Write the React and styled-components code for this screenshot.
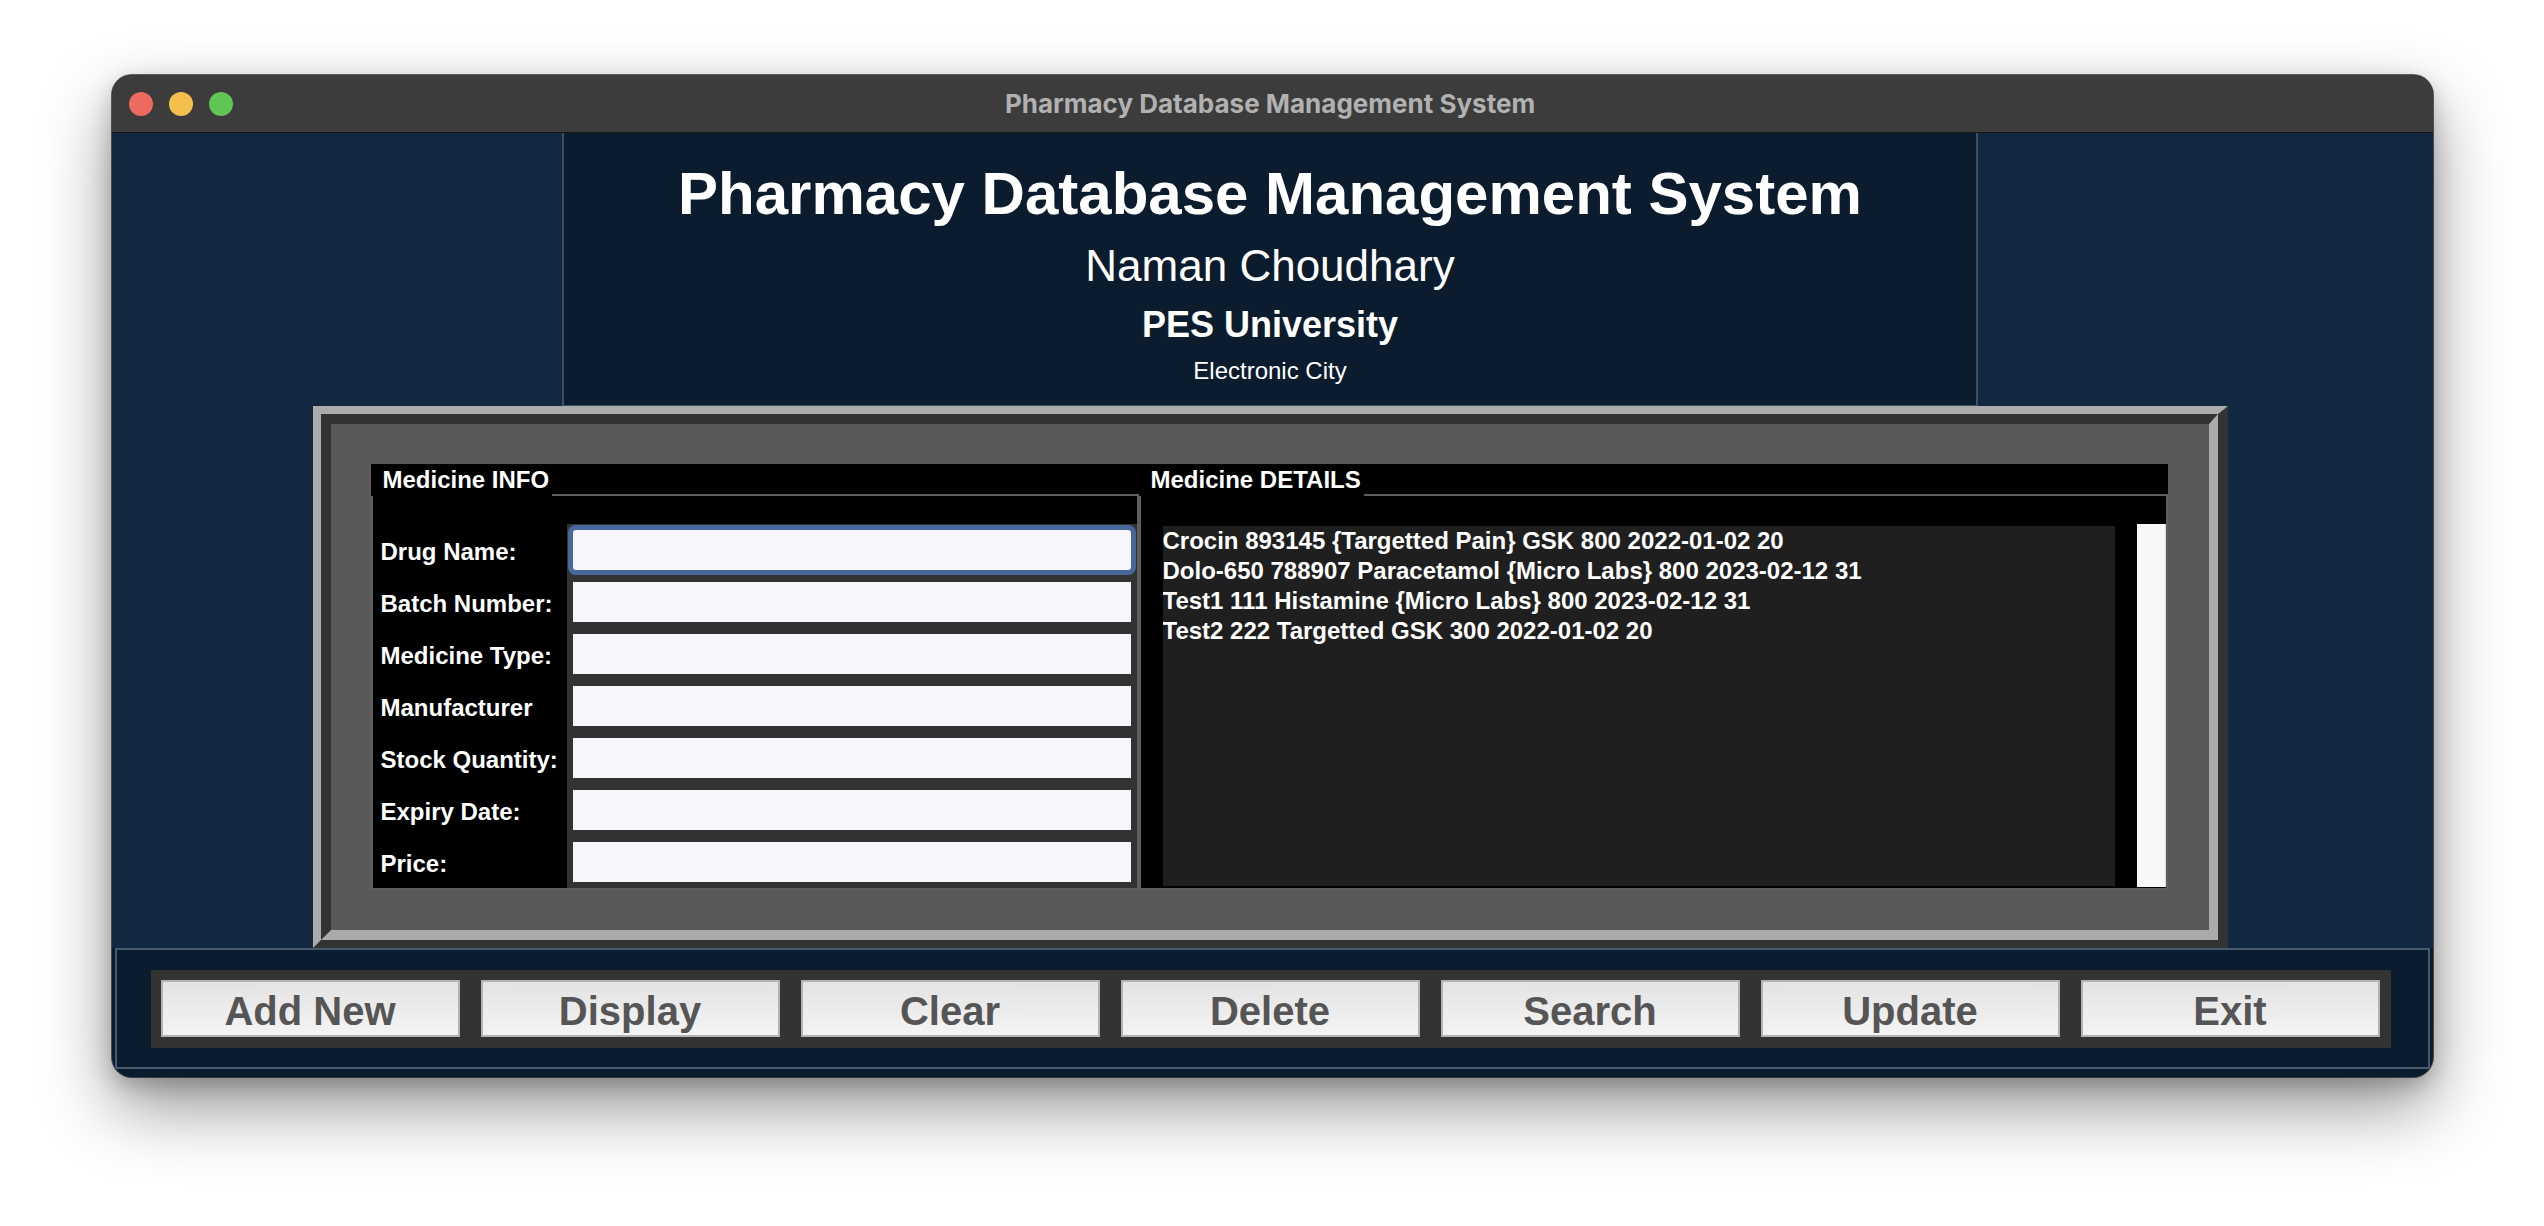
import React from "react";
import styled, { createGlobalStyle } from "styled-components";

const GlobalStyle = createGlobalStyle`
  html, body { margin: 0; padding: 0; background: #ffffff; }
  body {
    width: 2544px;
    height: 1226px;
    overflow: hidden;
    font-family: "Liberation Sans", Arial, sans-serif;
  }
  * { box-sizing: border-box; }
`;

const Page = styled.div`
  width: 2544px;
  height: 1226px;
  padding-top: 75px;
  display: flex;
  justify-content: center;
  align-items: flex-start;
  background: #ffffff;
`;

const Window = styled.div`
  width: 2321px;
  height: 1002px;
  border-radius: 20px;
  overflow: hidden;
  background: #0b1c2e;
  box-shadow: 0 0 0 1px rgba(0, 0, 0, 0.6), 0 30px 70px rgba(0, 0, 0, 0.42),
    0 8px 22px rgba(0, 0, 0, 0.22);
  display: flex;
  flex-direction: column;
`;

const TitleBar = styled.div`
  flex: none;
  height: 58px;
  background: #3c3c3c;
  border-bottom: 1px solid #161616;
  display: grid;
  grid-template-columns: 1fr auto 1fr;
  align-items: center;
`;

const Lights = styled.div`
  display: flex;
  gap: 16px;
  padding-left: 17px;
`;

const Light = styled.span`
  width: 24px;
  height: 24px;
  border-radius: 50%;
  background: ${(p) => p.$color};
`;

const WindowTitle = styled.div`
  font-family: Inter, "Open Sans", sans-serif;
  font-weight: 700;
  font-size: 26px;
  color: #b1b1b1;
  white-space: nowrap;
  margin-left: -4px;
`;

const Main = styled.div`
  flex: none;
  height: 815px;
  background: #112840;
  display: flex;
  flex-direction: column;
  align-items: center;
  padding-right: 4px;
`;

const Header = styled.header`
  width: 1416px;
  height: 273px;
  flex: none;
  background: #0b1c2e;
  border-left: 2px solid #3d4f62;
  border-right: 2px solid #3d4f62;
  border-bottom: 1px solid #3d4f62;
  display: flex;
  flex-direction: column;
  align-items: center;
  padding-top: 31px;
  color: #ffffff;
`;

const HeadLine = styled.div`
  font-family: "Liberation Sans", Arial, sans-serif;
  font-weight: ${(p) => (p.$bold ? 700 : 400)};
  font-size: ${(p) => p.$size}px;
  line-height: ${(p) => p.$size}px;
  margin-top: ${(p) => p.$gap || 0}px;
  white-space: nowrap;
`;

const Frame = styled.section`
  width: 1915px;
  height: 542px;
  flex: none;
  border-style: solid;
  border-width: 8px 10px 8px 8px;
  border-color: #ababab #333333 #333333 #ababab;
`;

const FrameInner = styled.div`
  height: 100%;
  border-style: solid;
  border-width: 10px 9px 10px 10px;
  border-color: #333333 #ababab #ababab #333333;
  background: #595959;
  padding: 40px 41px 40px 40px;
`;

const Panel = styled.div`
  height: 100%;
  background: #000000;
  display: grid;
  grid-template-columns: 768px 1fr;
`;

const Group = styled.div`
  display: flex;
  flex-direction: column;
  min-width: 0;
`;

const GroupHead = styled.div`
  height: 32px;
  flex: none;
  display: flex;
  align-items: flex-end;
`;

const GroupTitle = styled.div`
  font-weight: 700;
  font-size: 24px;
  line-height: 32px;
  color: #ffffff;
  padding: 0 3px 0 12px;
  white-space: nowrap;
`;

const GroupRule = styled.div`
  flex: 1;
  height: 2px;
  background: #5f5f5f;
`;

const FormBody = styled.div`
  flex: 1;
  border: 2px solid #5f5f5f;
  border-top: none;
  padding-top: 28px;
  display: grid;
  grid-template-columns: 194px 1fr;
  grid-auto-rows: 52px;
`;

const FieldLabel = styled.label`
  display: flex;
  align-items: center;
  padding: 3px 0 0 8px;
  font-weight: 700;
  font-size: 24px;
  color: #ffffff;
  white-space: nowrap;
`;

const FieldCell = styled.div`
  background: #333333;
  padding: 6px;
`;

const Entry = styled.input`
  display: block;
  width: 100%;
  height: 40px;
  border: none;
  outline: none;
  margin: 0;
  padding: 0 6px;
  background: #f6f6fc;
  font-family: "Liberation Sans", Arial, sans-serif;
  font-size: 24px;
  border-radius: ${(p) => (p.$focused ? "3px" : "0")};
  box-shadow: ${(p) => (p.$focused ? "0 0 0 5px #48679a" : "none")};
`;

const ListBody = styled.div`
  flex: 1;
  border: 2px solid #5f5f5f;
  border-top: none;
  padding: 28px 0 1px 22px;
  display: flex;
  gap: 22px;
`;

const Listbox = styled.div`
  flex: 1;
  margin: 2px 0 1px;
  background: #1f1f1f;
  padding: 0;
  overflow: hidden;
`;

const ListRow = styled.div`
  font-weight: 700;
  font-size: 24px;
  line-height: 30px;
  color: #ffffff;
  white-space: nowrap;
`;

const Scrollbar = styled.div`
  width: 29px;
  flex: none;
  background: #f8f8f8;
  border-right: 1px solid #dcdcdc;
`;

const BottomBar = styled.footer`
  flex: none;
  height: 121px;
  margin: 0 3px;
  border: 2px solid #465b71;
  background: #0b1c2e;
  display: flex;
  justify-content: center;
  padding-top: 20px;
`;

const ButtonStrip = styled.div`
  width: 2240px;
  height: 78px;
  background: #333333;
  display: flex;
  gap: 21px;
  padding: 10px 11px 11px 10px;
  margin-left: -3px;
`;

const ActionButton = styled.button`
  width: 299px;
  height: 57px;
  flex: none;
  border: 2px solid #b3b3b3;
  background: linear-gradient(#e3e3e3, #f4f4f4);
  font-family: "Liberation Sans", Arial, sans-serif;
  font-weight: 700;
  font-size: 40px;
  color: #555555;
  padding: 6px 0 0;
  display: flex;
  align-items: center;
  justify-content: center;
  cursor: pointer;
`;

const fields = [
  "Drug Name:",
  "Batch Number:",
  "Medicine Type:",
  "Manufacturer",
  "Stock Quantity:",
  "Expiry Date:",
  "Price:",
];

const records = [
  "Crocin 893145 {Targetted Pain} GSK 800 2022-01-02 20",
  "Dolo-650 788907 Paracetamol {Micro Labs} 800 2023-02-12 31",
  "Test1 111 Histamine {Micro Labs} 800 2023-02-12 31",
  "Test2 222 Targetted GSK 300 2022-01-02 20",
];

const actions = ["Add New", "Display", "Clear", "Delete", "Search", "Update", "Exit"];

export default function App() {
  return (
    <>
      <GlobalStyle />
      <Page>
        <Window>
          <TitleBar>
            <Lights>
              <Light $color="#ed6a5e" />
              <Light $color="#f5bf4f" />
              <Light $color="#61c554" />
            </Lights>
            <WindowTitle>Pharmacy Database Management System</WindowTitle>
            <div />
          </TitleBar>
          <Main>
            <Header>
              <HeadLine $bold $size={60}>
                Pharmacy Database Management System
              </HeadLine>
              <HeadLine $size={44} $gap={20}>
                Naman Choudhary
              </HeadLine>
              <HeadLine $bold $size={36} $gap={19}>
                PES University
              </HeadLine>
              <HeadLine $size={24} $gap={16}>
                Electronic City
              </HeadLine>
            </Header>
            <Frame>
              <FrameInner>
                <Panel>
                  <Group>
                    <GroupHead>
                      <GroupTitle>Medicine INFO</GroupTitle>
                      <GroupRule />
                    </GroupHead>
                    <FormBody>
                      {fields.map((f, i) => (
                        <React.Fragment key={f}>
                          <FieldLabel>{f}</FieldLabel>
                          <FieldCell>
                            <Entry $focused={i === 0} defaultValue="" />
                          </FieldCell>
                        </React.Fragment>
                      ))}
                    </FormBody>
                  </Group>
                  <Group>
                    <GroupHead>
                      <GroupTitle>Medicine DETAILS</GroupTitle>
                      <GroupRule />
                    </GroupHead>
                    <ListBody>
                      <Listbox>
                        {records.map((r) => (
                          <ListRow key={r}>{r}</ListRow>
                        ))}
                      </Listbox>
                      <Scrollbar />
                    </ListBody>
                  </Group>
                </Panel>
              </FrameInner>
            </Frame>
          </Main>
          <BottomBar>
            <ButtonStrip>
              {actions.map((a) => (
                <ActionButton key={a}>{a}</ActionButton>
              ))}
            </ButtonStrip>
          </BottomBar>
        </Window>
      </Page>
    </>
  );
}
